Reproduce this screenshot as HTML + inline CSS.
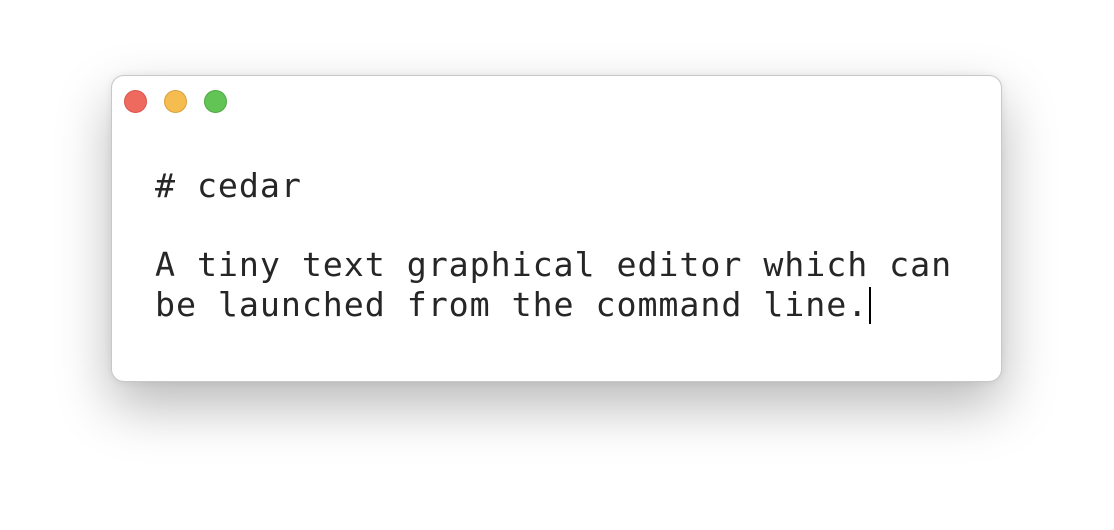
<!DOCTYPE html>
<html><head><style>
html,body{margin:0;padding:0;width:1114px;height:530px;background:#fff;overflow:hidden}
.win{position:absolute;left:111px;top:75px;width:889px;height:305px;background:#fff;border:1px solid #c8c8c8;border-radius:13px;box-shadow:0 24px 55px rgba(0,0,0,0.28),0 0 8px rgba(0,0,0,0.07)}
.dot{position:absolute;top:14px;width:23px;height:23px;border-radius:50%;box-sizing:border-box}
.r{left:12px;background:#ee6a5f;border:1px solid #d9544a}
.y{left:52px;background:#f5bd4f;border:1px solid #d9a13a}
.g{left:92px;background:#61c454;border:1px solid #4ea944}
pre{position:absolute;left:43px;top:90px;margin:0;font-family:"DejaVu Sans Mono","Liberation Mono",monospace;font-size:33.3px;line-height:39.5px;color:#262626;letter-spacing:0.93px}
.cur{display:inline-block;width:2px;height:37px;background:#000;vertical-align:-8px;margin-left:1px}
</style></head><body>
<div class="win">
<div class="dot r"></div><div class="dot y"></div><div class="dot g"></div>
<pre># cedar

A tiny text graphical editor which can
be launched from the command line.<span class="cur"></span></pre>
</div>
</body></html>
